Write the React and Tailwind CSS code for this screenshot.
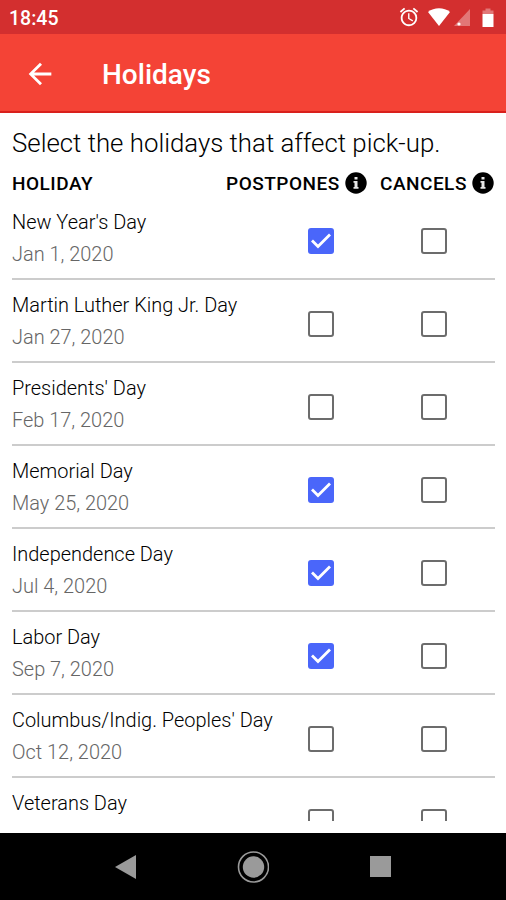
import { useState } from "react";
import { MdArrowBack, MdAccessAlarm } from "react-icons/md";
import clsx from "clsx";

const HOLIDAYS = [
  { name: "New Year's Day", date: "Jan 1, 2020", postpones: true },
  { name: "Martin Luther King Jr. Day", date: "Jan 27, 2020" },
  { name: "Presidents' Day", date: "Feb 17, 2020" },
  { name: "Memorial Day", date: "May 25, 2020", postpones: true },
  { name: "Independence Day", date: "Jul 4, 2020", postpones: true },
  { name: "Labor Day", date: "Sep 7, 2020", postpones: true },
  { name: "Columbus/Indig. Peoples' Day", date: "Oct 12, 2020" },
  { name: "Veterans Day" },
];

const StatusBar = () => (
  <div className="h-[34px] shrink-0 bg-[#d32f2f] text-white flex items-center pl-[9px] pr-3">
    <span className="flex-1 text-[19.5px] leading-none font-medium pt-1">
      18:45
    </span>
    <MdAccessAlarm className="w-[22px] h-[22px] mr-2" />
    <svg viewBox="0 0 22 18" className="w-[22px] h-[18px] mr-1">
      <path d="M0 4C6-1 16-1 22 4L11 18z" fill="currentColor" />
    </svg>
    <svg viewBox="0 0 16 17" className="w-4 h-[17px] mr-3">
      <path d="M16 0v17H0z" fill="currentColor" opacity="0.35" />
      <circle cx="5" cy="15" r="1.600" fill="currentColor" />
    </svg>
    <svg viewBox="0 0 12 19" className="w-3 h-[19px]">
      <path
        d="M3.500 0.500h5v2h3V6h-11V2.500h3z"
        fill="currentColor"
        opacity="0.35"
      />
      <path d="M0.500 6h11v13h-11z" fill="currentColor" />
    </svg>
  </div>
);

const Header = () => (
  <div className="h-[79px] shrink-0 bg-[#f44336] border-b-2 border-[#d9201c] text-white flex items-center">
    <MdArrowBack className="w-[34px] h-[34px] ml-[23px] mt-0.5" />
    <h1 className="ml-[45px] pt-1 text-[28px] leading-none font-medium">
      Holidays
    </h1>
  </div>
);

const InfoIcon = () => (
  <svg viewBox="0 0 22 22" className="w-[22px] h-[22px] shrink-0 -mt-0.5">
    <circle cx="11" cy="11" r="10.700" fill="black" />
    <path
      d="M9.500 5h3v2.500h-3zM8.500 9h4v6h1v1.800h-5V15h1v-4.200h-1z"
      fill="#e8e8e8"
    />
  </svg>
);

const Checkbox = ({ checked, onClicked }) => (
  <button
    onClick={onClicked}
    className={clsx(
      "w-[26px] h-[26px] rounded-[3px] flex items-center justify-center",
      checked ? "bg-[#4a66fa]" : "border-2 border-[#6c6c6c]"
    )}
  >
    {checked && (
      <svg viewBox="0 0 26 26" className="w-[26px] h-[26px]">
        <path
          d="M4 12.500l6 6L22 6.500"
          fill="none"
          stroke="white"
          strokeWidth="2.800"
        />
      </svg>
    )}
  </button>
);

const HolidayRow = ({ holiday, onToggle }) => (
  <div className="h-[83px] shrink-0 border-b-2 border-[#cccccc] flex">
    <div className="w-[296px] pt-[13px] text-[19.95px] leading-6 font-light">
      <div className="text-black whitespace-nowrap">{holiday.name}</div>
      {holiday.date && (
        <div className="mt-2 text-[#666666]">{holiday.date}</div>
      )}
    </div>
    <div className="w-[113px] pt-[31px]">
      <Checkbox
        checked={!!holiday.postpones}
        onClicked={() => onToggle("postpones")}
      />
    </div>
    <div className="pt-[31px]">
      <Checkbox
        checked={!!holiday.cancels}
        onClicked={() => onToggle("cancels")}
      />
    </div>
  </div>
);

const NavBar = () => (
  <div className="h-[67px] shrink-0 bg-black flex justify-between items-center px-[115px]">
    <svg viewBox="0 0 21 24" className="w-[21px] h-6">
      <path d="M21 0v24L0 12z" fill="#9a9a9a" />
    </svg>
    <svg viewBox="0 0 32 32" className="w-8 h-8">
      <circle
        cx="16.500"
        cy="16"
        r="15"
        fill="none"
        stroke="#9a9a9a"
        strokeWidth="1.600"
      />
      <circle cx="16.500" cy="16" r="10.700" fill="#9a9a9a" />
    </svg>
    <div className="w-[21px] h-[21px] bg-[#9a9a9a]" />
  </div>
);

const App = () => {
  const [holidays, setHolidays] = useState(HOLIDAYS);

  const toggle = (index, field) => {
    setHolidays(
      holidays.map((h, i) => (i === index ? { ...h, [field]: !h[field] } : h))
    );
  };

  return (
    <div className="w-[506px] h-[900px] flex flex-col overflow-hidden bg-white font-['Roboto',sans-serif]">
      <StatusBar />
      <Header />
      <div className="flex-1 min-h-0 flex flex-col pl-3 pr-[11px] pb-3">
        <p className="pt-[15px] text-[25.8px] leading-[30px] font-light text-black whitespace-nowrap">
          Select the holidays that affect pick-up.
        </p>
        <div className="h-[39px] shrink-0 pt-[12px] flex items-center text-[19px] leading-none tracking-[0.5px] font-medium text-black">
          <span className="w-[214px]">HOLIDAY</span>
          <span className="w-[119px]">POSTPONES</span>
          <InfoIcon />
          <span className="w-[92px] ml-[13px]">CANCELS</span>
          <InfoIcon />
        </div>
        <div className="flex-1 min-h-0 overflow-hidden flex flex-col">
          {holidays.map((holiday, i) => (
            <HolidayRow
              key={holiday.name}
              holiday={holiday}
              onToggle={(field) => toggle(i, field)}
            />
          ))}
        </div>
      </div>
      <NavBar />
    </div>
  );
};

export default App;
